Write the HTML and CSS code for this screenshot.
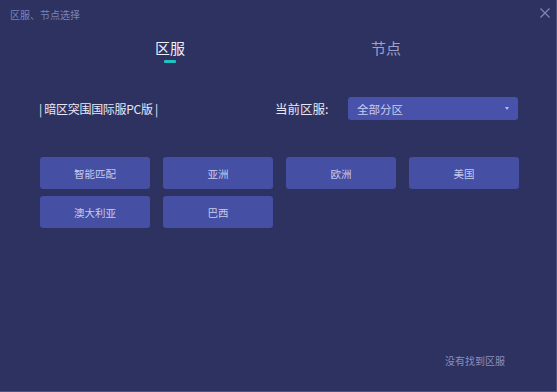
FILE: index.html
```html
<!DOCTYPE html>
<html lang="zh-CN">
<head>
  <meta charset="UTF-8" />
  <title>区服、节点选择</title>
  <link rel="stylesheet" href="styles.css">
</head>
<body>
  <div class="window">
    <div class="titlebar">
      <span class="title">区服、节点选择</span>
      <span class="close">
        <svg width="10" height="10" viewBox="0 0 10 10">
          <path d="M0.5 0.5 L9.5 9.5 M9.5 0.5 L0.5 9.5" stroke="#7f86bb" stroke-width="1.2" fill="none"/>
        </svg>
      </span>
    </div>

    <div class="tabs">
      <div class="tab active">区服<span class="line"></span></div>
      <div class="tab">节点</div>
    </div>

    <div class="info">
      <div class="game">| 暗区突围国际服PC版 |</div>
      <div class="current">当前区服:</div>
      <div class="select">
        <span>全部分区</span>
        <span class="arrow"></span>
      </div>
    </div>

    <div class="servers">
      <button>智能匹配</button>
      <button>亚洲</button>
      <button>欧洲</button>
      <button>美国</button>
      <button>澳大利亚</button>
      <button>巴西</button>
    </div>

    <div class="footer">没有找到区服</div>
  </div>
</body>
</html>
```

FILE: styles.css
```css
* {
  margin: 0;
  padding: 0;
  box-sizing: border-box;
}
body {
  font-family: "Noto Sans CJK SC", "Noto Sans", sans-serif;
  background-color: #2e3261;
}
.window {
  width: 557px;
  height: 392px;
  display: flex;
  flex-direction: column;
  border-right: 1px solid #4d5283;
  border-bottom: 1px solid #4d5283;
}
.titlebar {
  height: 28px;
  display: flex;
  align-items: center;
  justify-content: space-between;
  padding: 0 6px 0 10px;
}
.title {
  font-size: 10px;
  color: #7c83b8;
}
.close {
  display: flex;
  width: 10px;
  height: 10px;
  margin-top: -2px;
}
.tabs {
  display: flex;
  padding-left: 62px;
  margin-top: 10px;
}
.tab {
  width: 216px;
  text-align: center;
  font-size: 15px;
  line-height: 20px;
  color: #9ca1d0;
  display: flex;
  flex-direction: column;
  align-items: center;
}
.tab.active {
  color: #eceef8;
}
.tab .line {
  width: 12px;
  height: 3px;
  margin-top: 2px;
  background-color: #1fc3bf;
  border-radius: 1px;
}
.info {
  display: flex;
  align-items: center;
  margin-top: 34px;
  padding-left: 39px;
}
.game {
  font-size: 12px;
  letter-spacing: -0.3px;
  color: #e6e8f5;
  width: 236px;
}
.current {
  font-size: 12.5px;
  color: #e6e8f5;
  width: 73px;
}
.select {
  width: 170px;
  height: 23px;
  background-color: #4852aa;
  border-radius: 3px;
  display: flex;
  align-items: center;
  justify-content: space-between;
  padding: 0 9px;
  font-size: 11.5px;
  color: #c9cdef;
}
.arrow {
  width: 0;
  height: 0;
  border-left: 2.5px solid transparent;
  border-right: 2.5px solid transparent;
  border-top: 3px solid #b8bde6;
}
.servers {
  display: grid;
  grid-template-columns: repeat(4, 110px);
  gap: 7px 13px;
  padding-left: 40px;
  margin-top: 37px;
}
.servers button {
  height: 32px;
  border: none;
  border-radius: 3px;
  background-color: #454fa3;
  color: #c6caee;
  font-family: inherit;
  font-size: 10.5px;
  cursor: pointer;
}
.footer {
  margin-top: auto;
  margin-bottom: 23px;
  padding-left: 445px;
  font-size: 10px;
  color: #8a90c2;
}
```
